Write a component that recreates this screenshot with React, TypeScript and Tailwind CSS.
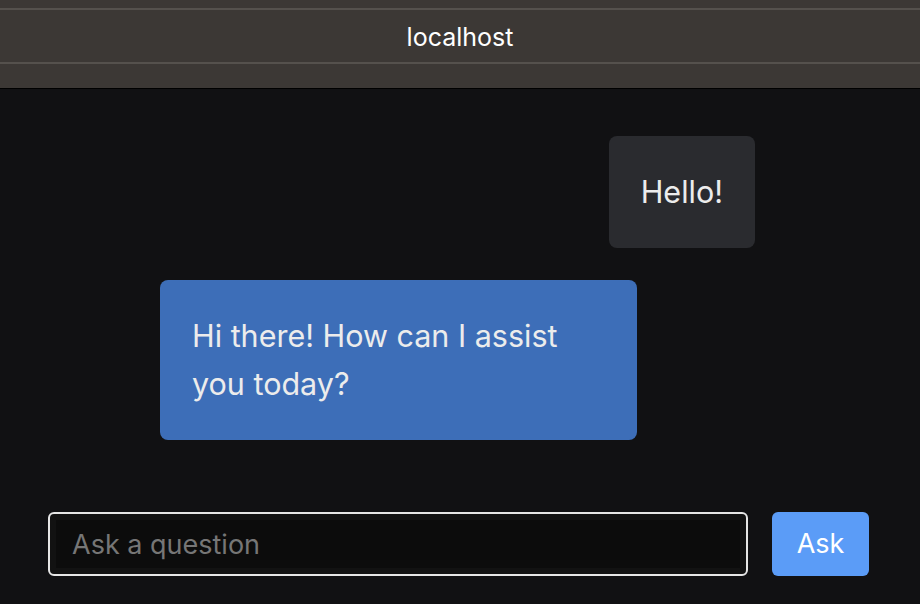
import React from 'react';

const font = { fontFamily: 'Inter, "Noto Sans", sans-serif' };

export default function App() {
  return (
    <div className="w-[920px] h-[604px] flex flex-col bg-[#111113] overflow-hidden" style={font}>
      {/* window title bar */}
      <div className="h-[89px] shrink-0 flex flex-col bg-[#3c3835] border-b border-black">
        <div className="h-[8px]" />
        <div className="h-[2px] bg-[#55514d]" />
        <div className="h-[52px] pt-[4px] flex items-center justify-center text-[25px] text-white">localhost</div>
        <div className="h-[2px] bg-[#55514d]" />
      </div>

      <div className="flex-1 flex flex-col pt-[47px] pl-[160px] pr-[165px]">
        <div className="self-end bg-[#2a2b2f] text-[#ececec] text-[30.5px] leading-[48px] p-8 rounded-lg">Hello!</div>
        <div className="mt-[32px] w-[477px] bg-[#3d6eb8] text-[#ececec] text-[30.5px] leading-[48px] p-8 rounded-lg">
          Hi there! How can I assist you today?
        </div>
      </div>

      <div className="flex items-center gap-6 pl-12 pr-[51px] pb-[28px]">
        <input
          className="flex-1 h-16 rounded-md border-2 border-[#e6e6e6] bg-[#0c0c0c] shadow-[inset_0_0_0_6px_#121212] px-[22px] text-[27px] text-white placeholder:text-[#767676] outline-none"
          placeholder="Ask a question"
        />
        <button className="h-16 w-[97px] rounded-md bg-[#5b9cf7] text-white text-[27px]">Ask</button>
      </div>
    </div>
  );
}
